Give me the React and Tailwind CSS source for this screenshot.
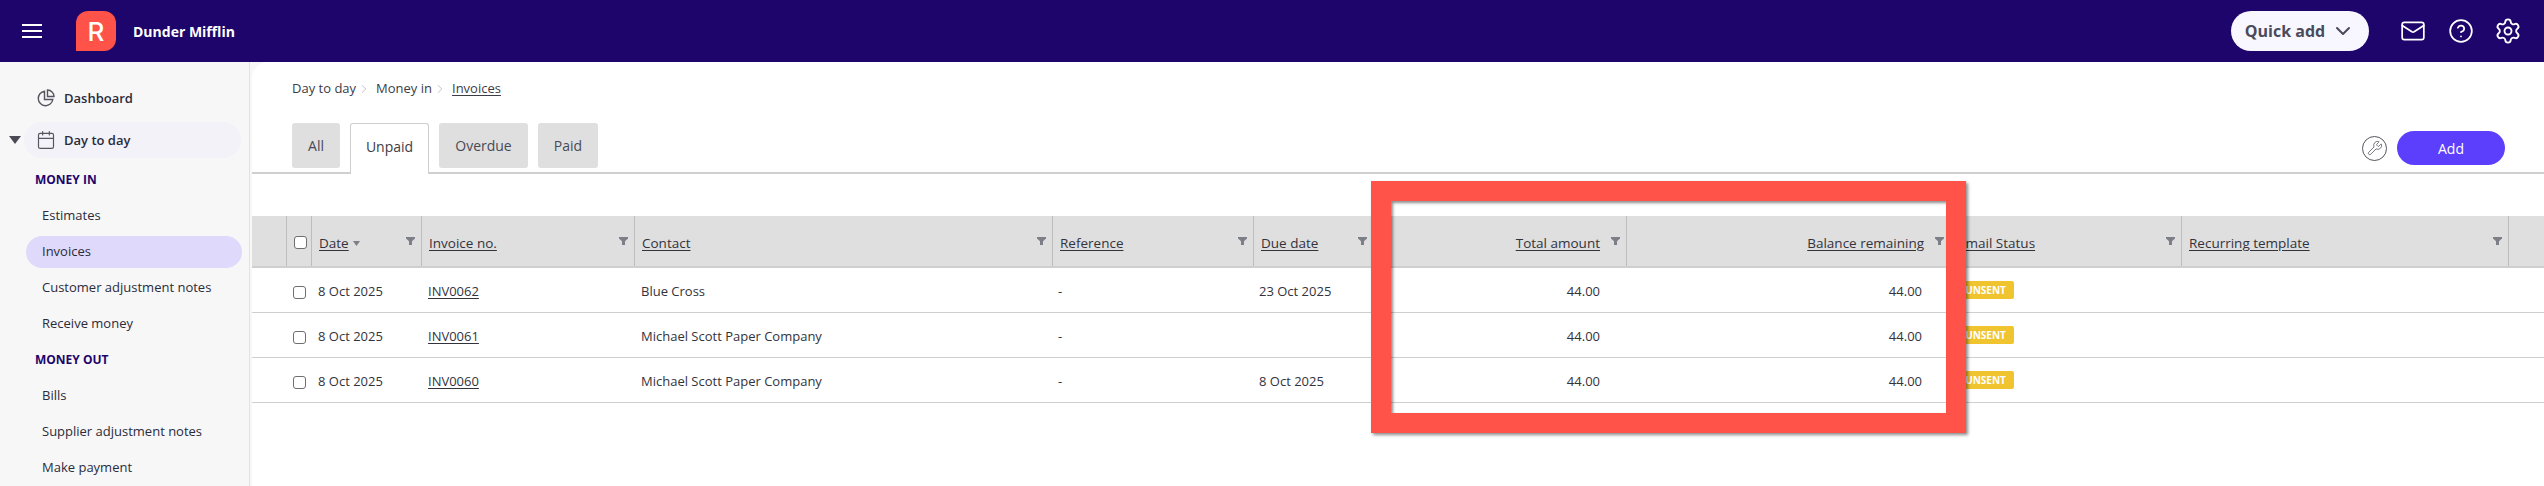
import React from 'react';
import { Calendar, ChevronDown, ChevronRight, CircleHelp, Mail, Settings, Wrench } from 'lucide-react';

const cols = 'grid grid-cols-[35px_25px_110px_213px_418px_201px_120px_253px_324px_231px_327px_35px]';

const headers = [
  { label: 'Date', sort: true },
  { label: 'Invoice no.' },
  { label: 'Contact' },
  { label: 'Reference' },
  { label: 'Due date' },
  { label: 'Total amount', right: true },
  { label: 'Balance remaining', right: true },
  { label: 'Email Status' },
  { label: 'Recurring template' },
];

const invoices = [
  { date: '8 Oct 2025', no: 'INV0062', contact: 'Blue Cross', due: '23 Oct 2025' },
  { date: '8 Oct 2025', no: 'INV0061', contact: 'Michael Scott Paper Company', due: '' },
  { date: '8 Oct 2025', no: 'INV0060', contact: 'Michael Scott Paper Company', due: '8 Oct 2025' },
];

const Funnel = () => (
  <svg width="9" height="8" viewBox="0 0 9 8" className="shrink-0">
    <path d="M0 0h9v1.5L6 4.2V8H3V4.2L0 1.5z" fill="#7d7f88" />
  </svg>
);

const Checkbox = () => (
  <span className="block h-[13px] w-[13px] rounded-[3px] border border-[#6f6f6f] bg-white" />
);

const NavItem = ({ children, active }) => (
  <div className="flex h-9 items-center">
    <div className={`ml-[26px] flex h-8 w-[216px] items-center rounded-2xl pl-4 ${active ? 'bg-[#dfdafc]' : ''}`}>
      {children}
    </div>
  </div>
);

const NavHeading = ({ children }) => (
  <div className="flex h-9 items-center pl-[35px] text-[12px] font-bold text-[#1d056b]">{children}</div>
);

const Sidebar = () => (
  <aside className="h-full w-[250px] shrink-0 border-r border-[#e2e1f0] bg-[#f7f7f8] pt-[18px] text-[13px] text-[#2b2b3a]">
    <div className="flex h-9 items-center pl-[37px] text-[13px] font-semibold">
      <svg width="18" height="18" viewBox="0 0 18 18" fill="none" stroke="#55555f" strokeWidth="1.4" className="mr-[9px]">
        <path d="M7.5 2.2a7.3 7.3 0 1 0 8.3 8.3H7.5z" />
        <path d="M10.5 1v6.5H17A6.5 6.5 0 0 0 10.5 1z" />
      </svg>
      <span className="pt-0.5">Dashboard</span>
    </div>
    <div className="mt-1.5 flex h-9 items-center">
      <svg width="12" height="8" viewBox="0 0 12 8" className="ml-[9px] mr-[3px]">
        <path d="M0 0h12L6 8z" fill="#4a4a55" />
      </svg>
      <div className="flex h-9 w-[217px] items-center rounded-[18px] bg-[#f2f2f8] pl-[12px] text-[13px] font-semibold">
        <Calendar size={20} strokeWidth={1.4} className="mr-2 text-[#55555f]" />
        <span className="pt-0.5">Day to day</span>
      </div>
    </div>
    <div className="mt-1">
      <NavHeading>MONEY IN</NavHeading>
      <NavItem>Estimates</NavItem>
      <NavItem active>Invoices</NavItem>
      <NavItem>Customer adjustment notes</NavItem>
      <NavItem>Receive money</NavItem>
      <NavHeading>MONEY OUT</NavHeading>
      <NavItem>Bills</NavItem>
      <NavItem>Supplier adjustment notes</NavItem>
      <NavItem>Make payment</NavItem>
    </div>
  </aside>
);

const Tab = ({ children, active, width }) => (
  <div
    className={`flex items-center justify-center rounded-[3px] text-[14px] ${width} ${
      active
        ? 'relative h-[51px] rounded-b-none border border-b-0 border-[#cfcfcf] bg-white pb-[6px] text-[#3c3c46]'
        : 'h-[45px] bg-[#dfdfdf] pb-px text-[#4a4a55]'
    }`}
  >
    {children}
  </div>
);

const Table = () => (
  <div className="mt-[42px] text-[13px] text-[#33333d]">
    <div className={`${cols} h-[52px] border-b-2 border-[#cfcfcf] bg-[#dfdfdf]`}>
      <div className="border-r border-[#bdbdbd]" />
      <div className="flex items-center justify-center border-r border-[#bdbdbd] pl-0.5 pt-0.5">
        <Checkbox />
      </div>
      {headers.map((h) => (
        <div key={h.label} className="flex items-center border-r border-[#bdbdbd] pl-[7px] pr-[6px] text-[13.5px] font-medium">
          <div className={`flex flex-1 items-center gap-1 pt-[4px] ${h.right ? 'justify-end' : ''}`}>
            <span className="underline underline-offset-2">{h.label}</span>
            {h.sort && (
              <svg width="7" height="5" viewBox="0 0 7 5">
                <path d="M0 0h7L3.5 5z" fill="#7d7f88" />
              </svg>
            )}
          </div>
          <div className={h.right ? 'ml-[11px]' : ''}>
            <Funnel />
          </div>
        </div>
      ))}
      <div />
    </div>
    {invoices.map((row) => (
      <div key={row.no} className={`${cols} h-[45px] items-center border-b border-[#cfcfcf]`}>
        <div />
        <div className="flex justify-center pt-[5px]">
          <Checkbox />
        </div>
        <div className="pl-[6px] pt-[3px]">{row.date}</div>
        <div className="pl-[6px] pt-[3px] underline underline-offset-2">{row.no}</div>
        <div className="pl-[6px] pt-[3px]">{row.contact}</div>
        <div className="pl-[5px] pt-[3px]">-</div>
        <div className="pl-[5px] pt-[3px]">{row.due}</div>
        <div className="pr-[27px] pt-[3px] text-right">44.00</div>
        <div className="pr-[29px] pt-[3px] text-right">44.00</div>
        <div className="pl-[6px]">
          <span className="flex h-[18px] w-[57px] items-center justify-center rounded-[2px] bg-[#f0c42f] text-[10px] font-bold text-white">
            UNSENT
          </span>
        </div>
        <div />
        <div />
      </div>
    ))}
  </div>
);

export default function App() {
  return (
    <div className="relative flex h-screen w-full flex-col overflow-hidden bg-white font-['Open_Sans',sans-serif]">
      <header className="flex h-[62px] shrink-0 items-center bg-[#1d056b] text-white">
        <div className="ml-[22px] flex h-[14px] w-5 flex-col justify-between">
          <span className="h-0.5 bg-white" />
          <span className="h-0.5 bg-white" />
          <span className="h-0.5 bg-white" />
        </div>
        <div className="ml-[34px] flex h-10 w-10 items-center justify-center rounded-xl rounded-bl-none bg-[#ff5349] font-['Inter',sans-serif] text-[26px] font-medium">
          R
        </div>
        <div className="ml-[17px] text-[14px] font-bold">Dunder Mifflin</div>
        <div className="ml-auto flex h-10 w-[138px] items-center justify-center gap-1.5 rounded-[20px] bg-[#f8f7ff] text-[16px] font-bold text-[#4a4a5a]">
          Quick add
          <ChevronDown size={24} strokeWidth={2} />
        </div>
        <Mail size={26} strokeWidth={1.6} className="ml-[31px]" />
        <CircleHelp size={26} strokeWidth={1.6} className="ml-[22px]" />
        <Settings size={28} strokeWidth={1.6} className="ml-[20px] mr-[22px]" />
      </header>
      <div className="flex min-h-0 flex-1 bg-[#f7f7f8]">
        <Sidebar />
        <main className="ml-0.5 min-w-0 flex-1 rounded-tl-2xl bg-white">
          <div className="flex h-[54px] items-center pl-10 text-[13px] text-[#3c3c46]">
            <span>Day to day</span>
            <ChevronRight size={14} strokeWidth={1} className="mx-px text-[#9a9aa2]" />
            <span className="ml-1">Money in</span>
            <ChevronRight size={14} strokeWidth={1} className="mx-px text-[#9a9aa2]" />
            <span className="ml-1 underline underline-offset-2">Invoices</span>
          </div>
          <div className="relative flex h-[58px] items-start border-b-2 border-[#cfcfcf] pl-10 pt-[7px]">
            <div className="flex items-start gap-[10px]">
              <Tab width="w-[48px]">All</Tab>
              <Tab width="w-[79px]" active>Unpaid</Tab>
              <Tab width="w-[89px]">Overdue</Tab>
              <Tab width="w-[60px]">Paid</Tab>
            </div>
            <div className="ml-auto mr-[39px] mt-[8px] flex items-center gap-[10px]">
              <div className="flex h-[25px] w-[25px] items-center justify-center rounded-full border border-[#55555f]">
                <Wrench size={16} strokeWidth={1.2} className="text-[#55555f]" />
              </div>
              <div className="flex h-[34px] w-[108px] items-center justify-center rounded-[17px] bg-[#5b3ffc] text-[14px] text-white">
                Add
              </div>
            </div>
          </div>
          <Table />
        </main>
      </div>
      {/* red highlight box drawn over the screenshot */}
      <div className="pointer-events-none absolute left-[1371px] top-[181px] h-[252px] w-[595px] border-[20px] border-[#ff5349] shadow-[2px_2px_3px_rgba(0,0,0,0.45),inset_2px_2px_3px_rgba(0,0,0,0.45)]" />
    </div>
  );
}
